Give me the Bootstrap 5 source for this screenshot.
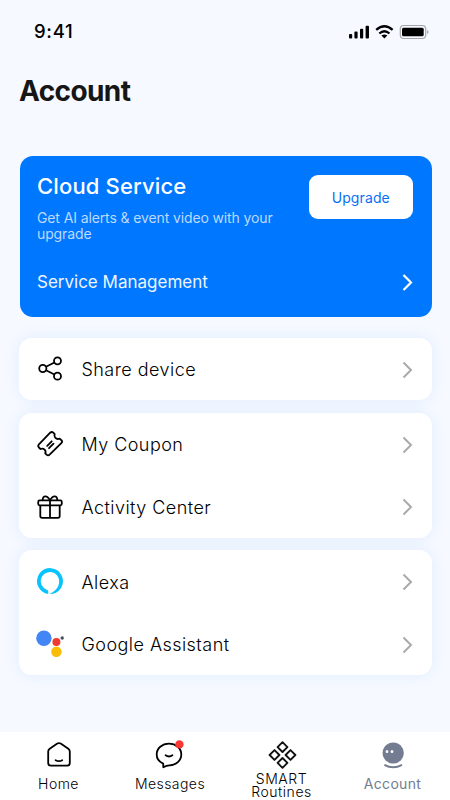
<!DOCTYPE html>
<html lang="en">
<head>
<meta charset="utf-8">
<meta name="viewport" content="width=device-width, initial-scale=1">
<title>Account</title>
<link href="https://cdn.jsdelivr.net/npm/bootstrap@5.3.0/dist/css/bootstrap.min.css" rel="stylesheet">
<style>
body{font-family:Inter,"Liberation Sans",sans-serif;background:#f6f9ff;color:#0c0c0c}
.screen{width:450px;height:800px}
.status{height:64px;padding:0 21px 0 34px}
.clock{font-size:18.5px;font-weight:500;letter-spacing:.7px;color:#000}
.page-title{font-size:28px;font-weight:650;letter-spacing:-.6px;line-height:34px;padding:10px 19px 0;height:92px;color:#161616}
.cloud{margin:0 18px 0 20px;height:161px;border-radius:13px;background:#07f;padding:19px 19px 0 17px}
.cloud-title{font-size:22px;font-weight:500;line-height:24px;letter-spacing:.15px;margin-top:-1px}
.cloud-copy{font-size:14px;line-height:16px;letter-spacing:-.12px;color:#bcd9ff;margin-top:12px;width:250px}
.cloud-link{font-size:17px;line-height:22px;color:#eef5ff;margin-top:29px}
.upgrade{--bs-btn-bg:#fff;--bs-btn-color:#0a6ff5;width:104.5px;height:44px;border-radius:9px;font-size:14px;letter-spacing:.1px}
.panels{padding:20.5px 18.5px 0 19px;gap:12.5px}
.panel{border-radius:13px;box-shadow:0 0 16px rgba(0,125,255,.09);--bs-list-group-border-width:0;--bs-list-group-color:#000}
.panel .entry{height:62.5px;padding:2px 18.5px 0 17px;font-size:18px;font-weight:300;letter-spacing:.45px}
.entry .glyph{width:28px;height:28px;margin-right:17.5px;margin-top:-1px}
.tabs{height:68px}
.tab{height:68px;font-size:14px;font-weight:300;line-height:12px;letter-spacing:.45px;color:#000;text-decoration:none}
.tab svg{width:30px;height:30px;margin-top:8px}
.tab.lone span{margin-top:8px}
.tab.pair span{margin-top:3px;line-height:12.5px;letter-spacing:.55px}
.t1{width:117px}.t2{width:106px}.t3{width:117px}.t4{width:105px}
.tab.muted{color:#747c91;font-weight:400;letter-spacing:.3px}
</style>
<script src="https://cdn.jsdelivr.net/npm/bootstrap@5.3.0/dist/js/bootstrap.bundle.min.js"></script>
</head>
<body>
<div class="screen d-flex flex-column overflow-hidden">
  <header class="status d-flex align-items-center justify-content-between">
    <span class="clock">9:41</span>
    <svg width="82" height="16" viewBox="347 24 82 16" fill="none">
      <g fill="#000"><rect x="349" y="34" width="3.2" height="4.6" rx="1"/><rect x="354.400" y="31.500" width="3.200" height="7.100" rx="1"/><rect x="360" y="28.700" width="3.200" height="9.900" rx="1"/><rect x="365.600" y="25.700" width="3.400" height="12.900" rx="1"/></g>
      <g stroke="#000" stroke-width="2.3"><path d="M376.200 29.800Q384.400 22.600 392.600 29.800"/><path d="M379.300 33.500Q384.400 29.100 389.500 33.500"/></g>
      <path d="M381.400 35.500Q384.400 33.300 387.400 35.500L384.400 38.500Z" fill="#000"/>
      <rect x="400.300" y="25.500" width="25.400" height="13" rx="3.500" stroke="#a4a6aa" stroke-width="1.200"/><rect x="402" y="27.800" width="21.700" height="8.500" rx="1.500" fill="#000"/><path d="M427.200 30Q430 32 427.200 34.200Z" fill="#9fa1a6"/>
    </svg>
  </header>
  <h1 class="page-title m-0">Account</h1>
  <section class="cloud text-white">
    <div class="d-flex justify-content-between">
      <div>
        <h2 class="cloud-title mb-0">Cloud Service</h2>
        <p class="cloud-copy mb-0">Get AI alerts &amp; event video with your upgrade</p>
      </div>
      <button class="btn upgrade p-0 flex-shrink-0">Upgrade</button>
    </div>
    <div class="cloud-link d-flex justify-content-between align-items-center">
      <span>Service Management</span>
      <svg width="12" height="18" viewBox="0 0 12 18" fill="none" stroke="#fff" stroke-width="2.200"><path d="M2.500 2L10 9.500L2.500 17"/></svg>
    </div>
  </section>
  <main class="panels d-flex flex-column flex-grow-1">
    <div class="panel list-group">
      <a class="entry list-group-item list-group-item-action d-flex align-items-center" href="#">
        <svg class="glyph" viewBox="36 355 28 28" fill="none" stroke="#000" stroke-width="1.800"><circle cx="42.800" cy="368.500" r="3.600"/><circle cx="57.500" cy="360.800" r="3.500"/><circle cx="57.500" cy="376.200" r="3.500"/><path d="M46 366.800L54.400 362.500M46 370.200L54.400 374.500"/></svg>
        <span class="flex-grow-1">Share device</span>
        <svg width="12" height="18" viewBox="0 0 12 18" fill="none" stroke="#a9aaad" stroke-width="2"><path d="M2.500 1.500L10 9L2.500 16.500"/></svg>
      </a>
    </div>
    <div class="panel list-group">
      <a class="entry list-group-item list-group-item-action d-flex align-items-center" href="#">
        <svg class="glyph" viewBox="36 430 28 28" fill="none" stroke="#000" stroke-width="1.800" stroke-linejoin="round" stroke-linecap="round"><path d="M50.200 432.700Q51.800 431.300 53.300 432.700L54.700 434.200C53.500 436.900 56.200 440 59.600 438.600L61.200 440Q63 441.500 61.300 443.200L49.600 454.700Q48.100 456.100 46.600 454.700L45.200 453.300C46.600 450.600 43.600 447.500 40.500 449L38.900 447.500Q37.500 446 38.900 444.300Z"/><path d="M47.200 445.800L51.700 441.300M49 448.200L53.500 443.700"/></svg>
        <span class="flex-grow-1">My Coupon</span>
        <svg width="12" height="18" viewBox="0 0 12 18" fill="none" stroke="#a9aaad" stroke-width="2"><path d="M2.500 1.500L10 9L2.500 16.500"/></svg>
      </a>
      <a class="entry list-group-item list-group-item-action d-flex align-items-center" href="#">
        <svg class="glyph" viewBox="36 492.500 28 28" fill="none" stroke="#000" stroke-width="1.800"><rect x="38.200" y="499.900" width="23.600" height="4.900" rx="1.500"/><path d="M40.300 505V515.500Q40.300 517.400 42.200 517.400H57.800Q59.700 517.400 59.700 515.500V505M50 500V517M50 500C47.500 494.500 42.500 494.500 42.700 499.800M50 500C52.500 494.500 57.500 494.500 57.300 499.800"/></svg>
        <span class="flex-grow-1">Activity Center</span>
        <svg width="12" height="18" viewBox="0 0 12 18" fill="none" stroke="#a9aaad" stroke-width="2"><path d="M2.500 1.500L10 9L2.500 16.500"/></svg>
      </a>
    </div>
    <div class="panel list-group">
      <a class="entry list-group-item list-group-item-action d-flex align-items-center" href="#">
        <svg class="glyph" viewBox="36 568 28 28"><path fill="#09c3ff" fill-rule="evenodd" d="M48.300 594A13 13 0 1 1 49.500 594.100C55 591.500 59.200 587.500 59.200 581.300A9.200 9.200 0 1 0 46.600 589.700C47.800 590.100 48.300 590.800 48.300 591.700Z"/></svg>
        <span class="flex-grow-1">Alexa</span>
        <svg width="12" height="18" viewBox="0 0 12 18" fill="none" stroke="#a9aaad" stroke-width="2"><path d="M2.500 1.500L10 9L2.500 16.500"/></svg>
      </a>
      <a class="entry list-group-item list-group-item-action d-flex align-items-center" href="#">
        <svg class="glyph" viewBox="36 630.500 28 28"><circle cx="43.900" cy="638.800" r="7.700" fill="#4285f4"/><circle cx="56.400" cy="642.500" r="4" fill="#f03a30"/><circle cx="56.400" cy="652.300" r="5.200" fill="#fbbc05"/><circle cx="62.200" cy="638.500" r="1.700" fill="#48515c"/></svg>
        <span class="flex-grow-1">Google Assistant</span>
        <svg width="12" height="18" viewBox="0 0 12 18" fill="none" stroke="#a9aaad" stroke-width="2"><path d="M2.500 1.500L10 9L2.500 16.500"/></svg>
      </a>
    </div>
  </main>
  <nav class="tabs bg-white d-flex flex-shrink-0">
    <a class="tab lone t1 d-flex flex-column align-items-center" href="#">
      <svg viewBox="43.200 740 30 30" fill="none" stroke="#000" stroke-width="1.800" stroke-linecap="round" stroke-linejoin="round"><path d="M56.500 743.600Q58.200 742.500 59.900 743.600L67.500 748.700Q69 749.800 69 751.500V763Q69 765.600 66.400 765.600H50Q47.400 765.600 47.400 763V751.500Q47.400 749.800 48.900 748.700Z"/><path d="M54.800 760.200Q58.200 762.200 61.400 760.200"/></svg>
      <span>Home</span>
    </a>
    <a class="tab lone t2 d-flex flex-column align-items-center" href="#">
      <svg viewBox="155 740 30 30" fill="none" stroke="#000" stroke-width="1.800" stroke-linecap="round" stroke-linejoin="round"><path d="M163.300 767.300L163.200 763.500C159.500 762 156.700 758.500 156.700 754.500C156.700 748.300 162 743.600 169 743.600C176 743.600 181.300 748.300 181.300 754.500C181.300 760.500 176 765.300 169.500 765.300Q166.500 765.300 163.300 767.300Z"/><path d="M165.600 755.300Q169 757.700 172.400 755.300"/><circle cx="179.400" cy="744.400" r="4.200" fill="#f93632" stroke="none"/></svg>
      <span>Messages</span>
    </a>
    <a class="tab pair t3 d-flex flex-column align-items-center text-center" href="#">
      <svg viewBox="266.700 740 30 30" fill="none" stroke="#111" stroke-width="1.900" stroke-linejoin="round"><path d="M282.200 742.200L287.100 747.100L282.200 752L277.300 747.100ZM282.200 758L287.100 762.900L282.200 767.800L277.300 762.900ZM274.200 750.100L279.100 755L274.200 759.900L269.300 755ZM290.200 750.100L295.100 755L290.200 759.900L285.300 755Z"/></svg>
      <span>SMART<br>Routines</span>
    </a>
    <a class="tab lone t4 muted d-flex flex-column align-items-center" href="#">
      <svg viewBox="378 740 30 30" fill="none"><circle cx="393.200" cy="753" r="10.600" fill="#747c91"/><rect x="385.700" y="750.300" width="2.600" height="2.600" rx=".8" fill="#fff"/><rect x="390.700" y="750.300" width="2.600" height="2.600" rx=".8" fill="#fff"/><path d="M384.400 764.800Q393.200 769.800 402 764.800" stroke="#747c91" stroke-width="1.900"/></svg>
      <span>Account</span>
    </a>
  </nav>
</div>
</body>
</html>
